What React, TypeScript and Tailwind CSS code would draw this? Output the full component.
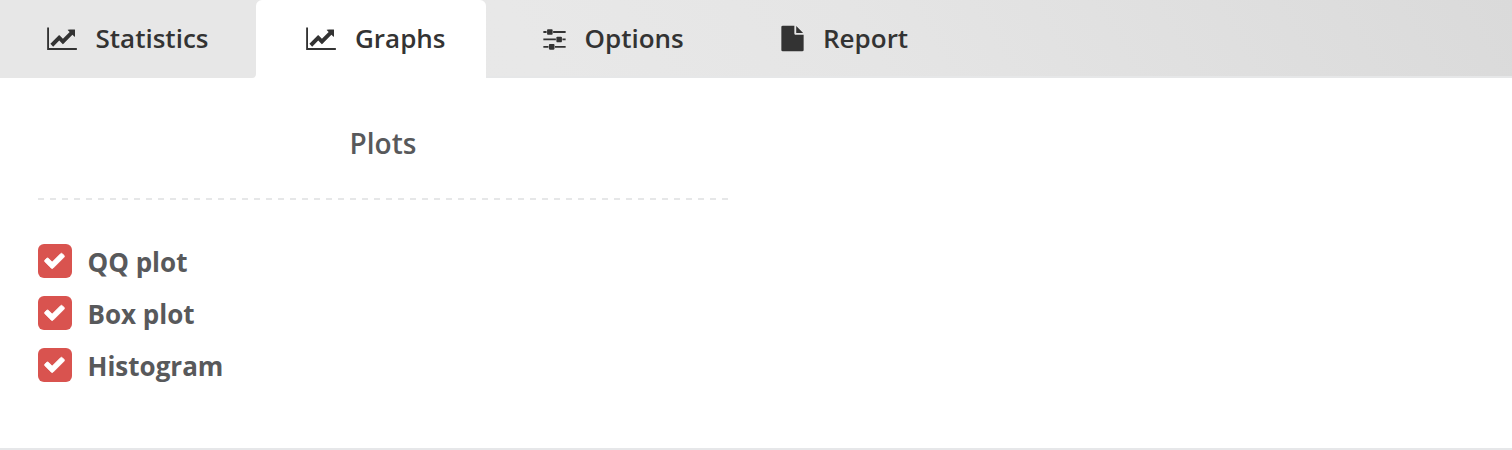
import React from 'react';

function ChartIcon() {
  return (
    <svg viewBox="0 0 2048 1792" className="h-[26px] w-[30px] shrink-0 translate-y-[0.75px]" fill="currentColor">
      <path d="M2048 1536v128H0V128h128v1408h1920zM1920 288v435q0 21-19.500 29.500T1865 745l-121-121-633 633q-10 10-23 10t-23-10l-233-233-416 416-192-192 585-585q10-10 23-10t23 10l233 233 464-464-121-121q-16-16-7.500-35.500T1581 256h307q14 0 23 9t9 23z" />
    </svg>
  );
}

function SlidersIcon() {
  return (
    <svg viewBox="0 0 1536 1792" className="h-[26px] w-[23px] shrink-0 translate-y-[0.5px]" fill="currentColor">
      <path d="M352 1408v128H0v-128h352zM704 1280q26 0 45 19t19 45v256q0 26-19 45t-45 19H448q-26 0-45-19t-19-45v-256q0-26 19-45t45-19h256zM864 896v128H0V896h864zM224 384v128H0V384h224zM1536 1408v128H800v-128h736zM576 256q26 0 45 19t19 45v256q0 26-19 45t-45 19H320q-26 0-45-19t-19-45V320q0-26 19-45t45-19h256zM1216 768q26 0 45 19t19 45v256q0 26-19 45t-45 19H960q-26 0-45-19t-19-45V832q0-26 19-45t45-19h256zM1536 896v128h-224V896h224zM1536 384v128H672V384h864z" />
    </svg>
  );
}

function FileIcon() {
  return (
    <svg viewBox="0 0 1536 1792" className="h-[26px] w-[23px] shrink-0 translate-y-[0.5px]" fill="currentColor">
      <path d="M1024 512V40q22 14 36 28l408 408q14 14 28 36h-472zM896 544q0 40 28 68t68 28h544v1056q0 40-28 68t-68 28H96q-40 0-68-28t-28-68V96q0-40 28-68T96 0h800v544z" />
    </svg>
  );
}

function PlotOption({ label }: { label: string }) {
  return (
    <label className="flex h-[34px] items-center">
      <span className="flex size-[34px] items-center justify-center rounded-[6px] bg-[#d9534f]">
        <svg viewBox="0 0 1792 1792" className="size-[23px] -translate-x-px -translate-y-px fill-white stroke-white stroke-[60]" strokeLinejoin="round">
          <path d="M1671 566q0 40-28 68l-724 724-136 136q-28 28-68 28t-68-28l-136-136-362-362q-28-28-28-68t28-68l136-136q28-28 68-28t68 28l294 295 656-657q28-28 68-28t68 28l136 136q28 28 28 68z" />
        </svg>
      </span>
      <span className="ml-[15.5px] pt-[2px] text-[26px] leading-[34px] font-bold">{label}</span>
    </label>
  );
}

export default function App() {
  return (
    <main className="flex h-[450px] w-full flex-col border-b-2 border-[#e6e7e9] bg-white font-['Open_Sans',sans-serif] text-[#58595b]">
      <nav className="flex h-[78px] border-b-2 border-[#e6e7e8] bg-[linear-gradient(60deg,#e7e7e7_0%,#e8e8e8_35%,#e5e5e5_57%,#dadada_100%)] text-[26px] font-semibold text-[#333]">
        <div className="-mb-[2px] flex w-[256px] items-center bg-white">
          <div className="flex h-full w-full items-center rounded-br-[4px] bg-[#e7e7e7] pb-[2px] pl-[47px]"><ChartIcon /><span className="ml-[18.5px]">Statistics</span></div>
        </div>
        <div className="-mb-[2px] flex w-[230px] items-center rounded-t-[6px] bg-white pb-[2px] pl-[50px]"><ChartIcon /><span className="ml-[19px]">Graphs</span></div>
        <div className="flex w-[238px] items-center pl-[57px]"><SlidersIcon /><span className="ml-[18.5px]">Options</span></div>
        <div className="flex items-center pl-[57px]"><FileIcon /><span className="ml-[19px]">Report</span></div>
      </nav>
      <section className="ml-[38px] w-[690px]">
        <h2 className="pt-[47px] text-center text-[28px] leading-[36px] font-semibold">Plots</h2>
        <svg className="mt-[37px] block h-[2px] w-full"><line x1="0" y1="1" x2="690" y2="1" stroke="#e6e7e8" strokeWidth="2" strokeDasharray="6 6" /></svg>
        <div className="mt-[44px] flex flex-col gap-[18px]">
          <PlotOption label="QQ plot" />
          <PlotOption label="Box plot" />
          <PlotOption label="Histogram" />
        </div>
      </section>
    </main>
  );
}
